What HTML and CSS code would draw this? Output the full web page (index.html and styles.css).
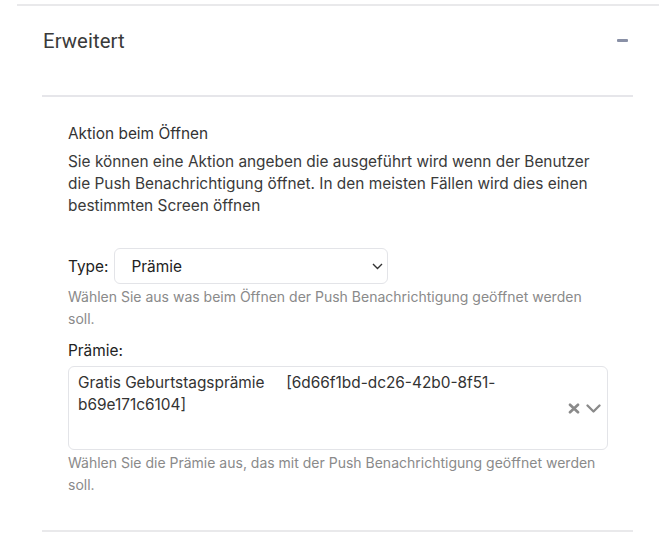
FILE: index.html
```html
<!DOCTYPE html>
<html lang="de">
<head>
<meta charset="utf-8">
<link rel="stylesheet" href="styles.css">
</head>
<body>
<section class="panel">
  <div class="inner">
    <header class="head">
      <h2 class="title">Erweitert</h2>
      <span class="minus" aria-label="Einklappen"></span>
    </header>
    <div class="content">
      <h3 class="sub">Aktion beim Öffnen</h3>
      <p class="desc">Sie können eine Aktion angeben die ausgeführt wird wenn der Benutzer die Push Benachrichtigung öffnet. In den meisten Fällen wird dies einen bestimmten Screen öffnen</p>

      <div class="type-row">
        <label class="lbl">Type:</label>
        <div class="select">
          <span>Prämie</span>
          <svg class="chev-s" width="11" height="7" viewBox="0 0 11 7"><path d="M1 1l4.5 4.5L10 1" fill="none" stroke="#333" stroke-width="1.4"/></svg>
        </div>
      </div>
      <p class="hint">Wählen Sie aus was beim Öffnen der Push Benachrichtigung geöffnet werden soll.</p>

      <div class="lbl lbl-block">Prämie:</div>
      <div class="multi">
        <div class="multi-val">Gratis Geburtstagsprämie &nbsp;&nbsp;&nbsp; [6d66f1bd-dc26-42b0-8f51-b69e171c6104]</div>
        <div class="multi-icons">
          <svg width="12" height="11" viewBox="0 0 12 11"><path d="M2 1.8l8 7.4M10 1.8l-8 7.4" stroke="#8a8a8a" stroke-width="2.7" stroke-linecap="round"/></svg>
          <svg width="15" height="9" viewBox="0 0 15 9"><path d="M1.5 1.5l6 6 6-6" fill="none" stroke="#8a8a8a" stroke-width="2.3" stroke-linecap="round" stroke-linejoin="round"/></svg>
        </div>
      </div>
      <p class="hint">Wählen Sie die Prämie aus, das mit der Push Benachrichtigung geöffnet werden soll.</p>
    </div>
  </div>
</section>
</body>
</html>
```
FILE: styles.css
```css
* { box-sizing: border-box; }
html, body { margin: 0; padding: 0; background: #fff; }
body {
  font-family: Inter, "Noto Sans", sans-serif;
  color: #333;
  width: 670px;
  height: 549px;
  overflow: hidden;
}
.panel {
  margin: 4px 11px 0 17px;
  border-top: 2px solid #e9e9eb;
}
.inner {
  padding: 0 26px 0 25px;
}
.head {
  height: 91px;
  display: flex;
  align-items: center;
  justify-content: space-between;
  border-bottom: 2px solid #e6e6ea;
  padding-bottom: 19px;
  padding-left: 1px;
}
.title {
  margin: 0;
  font-family: Roboto, Inter, sans-serif;
  font-weight: 400;
  font-size: 20.3px;
  color: #3a3a3a;
  letter-spacing: 0.1px;
}
.minus {
  width: 11px;
  height: 3px;
  background: #8990a6;
  border-radius: 1px;
  margin-right: 5px;
  margin-bottom: 2px;
}
.content {
  padding: 26px 25px 34px 26px;
  border-bottom: 2px solid #e9e9eb;
}
.sub {
  margin: 0;
  font-size: 15.4px;
  font-weight: 400;
  line-height: 22px;
  color: #333;
}
.desc {
  margin: 6px 0 0;
  font-size: 15.4px;
  line-height: 22px;
  color: #3a3a3a;
}
.type-row {
  display: flex;
  align-items: center;
  gap: 6px;
  margin-top: 31px;
}
.lbl {
  font-size: 15.4px;
  color: #222;
}
.select {
  width: 274px;
  height: 36px;
  border: 1px solid #e3e4e8;
  border-radius: 6px;
  display: flex;
  align-items: center;
  justify-content: space-between;
  padding: 0 4px 0 16px;
  font-size: 15.4px;
  color: #222;
}
.hint {
  margin: 2px 0 0;
  font-size: 14px;
  line-height: 22px;
  color: #8a8a8a;
}
.lbl-block {
  margin-top: 10px;
  line-height: 22px;
}
.multi {
  margin-top: 4px;
  height: 84px;
  border: 1px solid #e3e4e8;
  border-radius: 6px;
  display: flex;
  align-items: flex-start;
  padding: 5px 6px 0 9px;
}
.multi-val {
  flex: 1;
  font-size: 15.4px;
  line-height: 22px;
  color: #333;
  max-width: 440px;
}
.multi-icons {
  display: flex;
  align-items: center;
  gap: 6px;
  margin-top: 31px;
  margin-left: auto;
}
```
